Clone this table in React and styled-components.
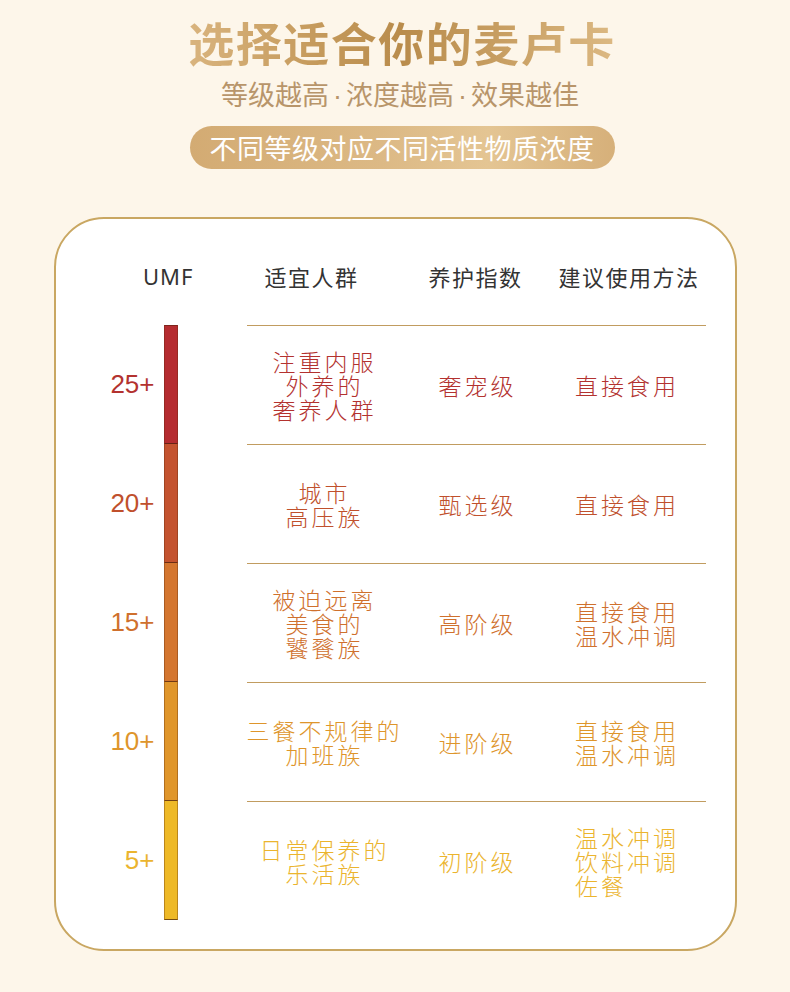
import React from "react";
import styled, { createGlobalStyle } from "styled-components";

const Global = createGlobalStyle`
  html, body { margin: 0; padding: 0; background: #fdf6ea; }
  body { font-family: "Noto Sans CJK SC", "Noto Sans", sans-serif; }
`;

const Page = styled.div`
  width: 790px;
  height: 992px;
  background: #fdf6ea;
  display: flex;
  flex-direction: column;
  align-items: center;
  padding-top: 13px;
  box-sizing: border-box;
  overflow: hidden;
`;

const Heading = styled.div`
  margin-left: 14px;
  display: flex;
  flex-direction: column;
  align-items: center;
`;

const Title = styled.h1`
  margin: 0;
  font-size: 46px;
  line-height: 56px;
  font-weight: 700;
  letter-spacing: 1.5px;
  background: linear-gradient(90deg, #d9b47e 0%, #c59a5c 30%, #b98c4c 50%, #c9a064 75%, #dcb983 100%);
  -webkit-background-clip: text;
  background-clip: text;
  color: transparent;
`;

const Subtitle = styled.div`
  margin-top: 7px;
  margin-right: 4px;
  font-size: 27px;
  line-height: 36px;
  font-weight: 400;
  color: #b8956a;
`;

const Dot = styled.span`
  font-family: "Liberation Sans", Arial, sans-serif;
  margin: 0 4px;
`;

const Pill = styled.div`
  margin-top: 12px;
  width: 425px;
  height: 43px;
  border-radius: 22px;
  background: linear-gradient(90deg, #d3ab73 0%, #dcb985 45%, #e4c593 70%, #d6b07a 100%);
  color: #ffffff;
  font-size: 27px;
  line-height: 43px;
  text-align: center;
  letter-spacing: 0.5px;
`;

const Card = styled.div`
  margin-top: 48px;
  width: 683px;
  height: 734px;
  box-sizing: border-box;
  border: 2px solid #c9a762;
  border-radius: 50px;
  background: #ffffff;
  display: flex;
  flex-direction: column;
`;

const HeaderRow = styled.div`
  display: flex;
  height: 106px;
  padding-top: 45px;
  box-sizing: border-box;
  font-size: 22px;
  line-height: 24px;
  color: #333333;
  letter-spacing: 1.5px;
`;

const HeaderUmf = styled.div`
  width: 138px;
  text-align: right;
  font-family: "Noto Sans", sans-serif;
  letter-spacing: 1px;
`;

const HeaderCols = styled.div`
  margin-left: 53px;
  width: 459px;
  display: grid;
  grid-template-columns: 152px 154px 153px;
`;

const HeaderCell = styled.div`
  text-align: center;
  padding-right: ${(p) => p.$shift || 0}px;
`;

const Row = styled.div`
  display: flex;
  height: 119px;
`;

const Level = styled.div`
  width: 108px;
  padding-right: 9px;
  box-sizing: border-box;
  display: flex;
  align-items: center;
  justify-content: flex-end;
  font-family: "Liberation Sans", Arial, sans-serif;
  font-size: 26px;
  color: ${(p) => p.$color};
`;

const Segment = styled.div`
  width: 14px;
  box-sizing: border-box;
  background: ${(p) => p.$color};
  border-left: 1px solid rgba(90, 40, 10, 0.35);
  border-right: 1px solid rgba(90, 40, 10, 0.35);
  border-bottom: 1px solid rgba(70, 30, 10, 0.7);
  border-top: ${(p) => (p.$first ? "1px solid rgba(70,30,10,0.5)" : "none")};
`;

const Cells = styled.div`
  margin-left: 69px;
  width: 459px;
  border-top: 1px solid #c19c60;
  display: grid;
  grid-template-columns: 156px 150px 153px;
  align-items: center;
  color: ${(p) => p.$color};
  font-size: 23px;
  line-height: 24px;
  font-weight: 300;
  letter-spacing: 3px;
`;

const Cell = styled.div`
  display: flex;
  justify-content: center;
  text-align: center;
  white-space: pre;
`;

const MethodCell = styled.div`
  display: flex;
  justify-content: center;
  padding-right: 4px;
`;

const MethodText = styled.div`
  text-align: left;
  white-space: pre;
`;

const rows = [
  { lvl: "25+", bar: "#b52c30", text: "#b3322f", who: "注重内服\n外养的\n奢养人群", idx: "奢宠级", use: "直接食用" },
  { lvl: "20+", bar: "#c4532f", text: "#c0502c", who: "城市\n高压族", idx: "甄选级", use: "直接食用" },
  { lvl: "15+", bar: "#d4762f", text: "#cf702d", who: "被迫远离\n美食的\n饕餮族", idx: "高阶级", use: "直接食用\n温水冲调" },
  { lvl: "10+", bar: "#e0962b", text: "#de952b", who: "三餐不规律的\n加班族", idx: "进阶级", use: "直接食用\n温水冲调" },
  { lvl: "5+", bar: "#eeb927", text: "#ebb42e", who: "日常保养的\n乐活族", idx: "初阶级", use: "温水冲调\n饮料冲调\n佐餐" },
];

export default function App() {
  return (
    <Page>
      <Global />
      <Heading>
        <Title>选择适合你的麦卢卡</Title>
        <Subtitle>
          等级越高<Dot>·</Dot>浓度越高<Dot>·</Dot>效果越佳
        </Subtitle>
        <Pill>不同等级对应不同活性物质浓度</Pill>
      </Heading>
      <Card>
        <HeaderRow>
          <HeaderUmf>UMF</HeaderUmf>
          <HeaderCols>
            <HeaderCell $shift={22}>适宜人群</HeaderCell>
            <HeaderCell>养护指数</HeaderCell>
            <HeaderCell>建议使用方法</HeaderCell>
          </HeaderCols>
        </HeaderRow>
        {rows.map((r, i) => (
          <Row key={r.lvl}>
            <Level $color={r.text}>{r.lvl}</Level>
            <Segment $color={r.bar} $first={i === 0} />
            <Cells $color={r.text}>
              <Cell>{r.who}</Cell>
              <Cell>{r.idx}</Cell>
              <MethodCell>
                <MethodText>{r.use}</MethodText>
              </MethodCell>
            </Cells>
          </Row>
        ))}
      </Card>
    </Page>
  );
}
